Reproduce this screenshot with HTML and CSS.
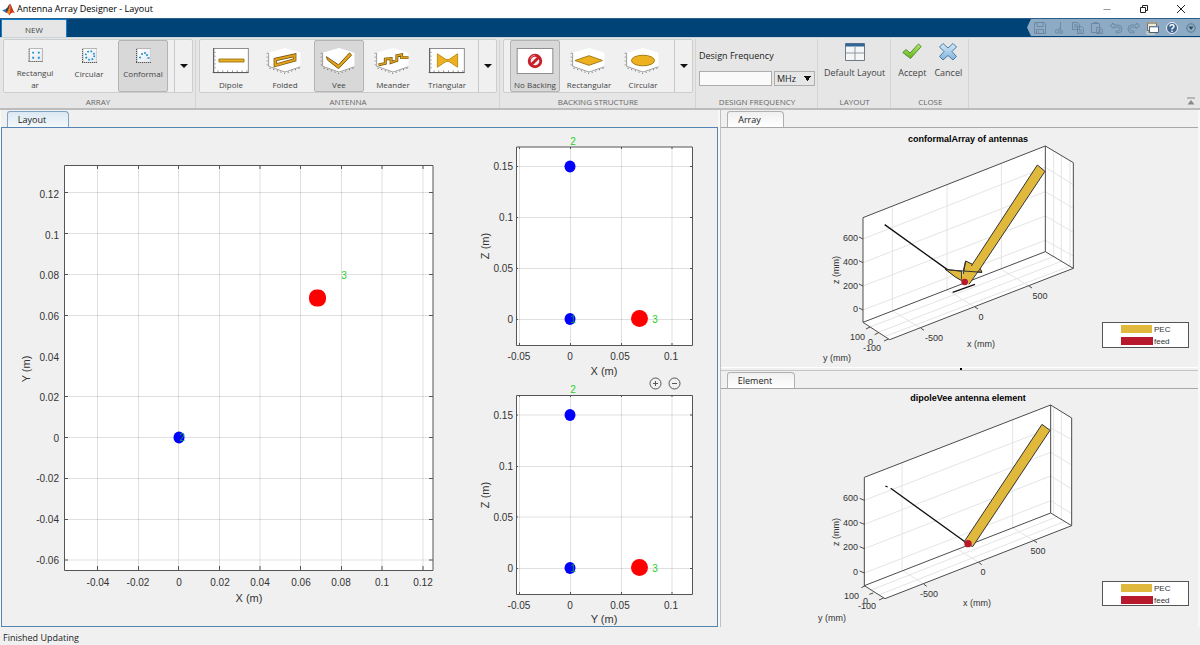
FILE: index.html
```html
<!DOCTYPE html>
<html lang="en">
<head>
<meta charset="utf-8">
<title>Antenna Array Designer - Layout</title>
<link rel="stylesheet" href="styles.css">
</head>
<body>
<svg class="defs" aria-hidden="true">
  <defs>
    <linearGradient id="sheet" x1="0" y1="0" x2="1" y2="1"><stop offset="0" stop-color="#fff"/><stop offset="1" stop-color="#e4e8ec"/></linearGradient>
    <linearGradient id="green" x1="0" y1="0" x2="0" y2="1"><stop offset="0" stop-color="#b5e86a"/><stop offset="1" stop-color="#5fb41e"/></linearGradient>
    <linearGradient id="blue" x1="0" y1="0" x2="0" y2="1"><stop offset="0" stop-color="#d4e9f8"/><stop offset="1" stop-color="#7fb2dc"/></linearGradient>
    <g id="flat-axes">
      <rect x="1" y=".5" width="36" height="25" fill="#fff" stroke="#8a8a8a"/>
      <path d="M1 0V26M0 25.500H37" stroke="#555"/>
      <path d="M2.500 4v20" stroke="#777" stroke-dasharray="1 3"/>
      <path d="M5 24h31" stroke="#444" stroke-dasharray="1 4"/>
    </g>
    <g id="cube-axes">
      <path d="M2 5L19 0L35 5V20L19 26L2 19Z" fill="#fff"/>
      <path d="M2 5V19L19 25L35 19.500" fill="none" stroke="#999"/>
      <path d="M.5 5V19" stroke="#777" stroke-dasharray="1 3"/>
      <path d="M3 21L19 26.500L34 21" fill="none" stroke="#555" stroke-dasharray="1 3"/>
    </g>
    <g id="small-axes">
      <rect x="1" y=".5" width="14" height="14" fill="url(#sheet)" stroke="#b5b5b5"/>
      <path d="M.5 1V15" stroke="#555" stroke-dasharray="1 1"/>
      <path d="M0 14.500H15" stroke="#555" stroke-dasharray="1 1"/>
    </g>
  </defs>
</svg>

<header class="titlebar">
  <svg class="logo" viewBox="0 0 13 13" aria-hidden="true">
    <path d="M0 7.500L4 5.800L6 7.600L3.700 9.500Z" fill="#3a7cb8"/>
    <path d="M4 5.800C6 5 6.500 1 8 1L6.800 8L3.700 9.500Z" fill="#24455f"/>
    <path d="M8 .8C9.500 1.500 11 8 13 10.500C11 9 9.500 9 7.500 12.500C6.800 11 5.500 9.800 3.700 9.500C6.500 8 7 2 8 .8Z" fill="#c8381c"/>
    <path d="M8 .8C8.700 3 8.500 8 7.500 12.500C6.800 11 6 10 5 9.600C7 7.500 7.500 3 8 .8Z" fill="#ee8a2a"/>
  </svg>
  <h1>Antenna Array Designer - Layout</h1>
  <div class="window-controls">
    <button type="button" aria-label="Minimize"><svg viewBox="0 0 10 10"><path d="M1.500 5.500h7" stroke="#999"/></svg></button>
    <button type="button" aria-label="Restore"><svg viewBox="0 0 10 10" fill="none" stroke="#222"><path d="M1.500 3.500h5v5h-5zM3.500 3V1.500h5v5H7"/></svg></button>
    <button type="button" aria-label="Close"><svg viewBox="0 0 10 10"><path d="M1 1l8 8M9 1l-8 8" stroke="#222"/></svg></button>
  </div>
</header>

<nav class="ribbon-tabs">
  <button type="button" class="ribbon-tab">NEW</button>
  <div class="quick-access">
    <button type="button" aria-label="Save" class="dim"><svg viewBox="0 0 14 14" fill="none" stroke="#56728c"><path d="M1.500 1.500h10l1 1v10h-11zM4 1.500v4h6v-4M3.500 12.500v-4h7v4M5.500 10v2.500"/></svg></button>
    <button type="button" aria-label="Cut" class="dim"><svg viewBox="0 0 14 14" fill="none" stroke="#56728c"><path d="M8.500 1v8M9 6L6 8.500"/><circle cx="5" cy="10.500" r="1.800"/><circle cx="9" cy="11" r="1.500"/></svg></button>
    <button type="button" aria-label="Copy" class="dim"><svg viewBox="0 0 14 14" fill="none" stroke="#56728c"><path d="M1.500 1.500h5l2 2v5h-7zM6.500 5.500h4l2 2v5h-6zM3 4h4M3 6h4M8 9h3M8 11h3"/></svg></button>
    <button type="button" aria-label="Paste" class="dim"><svg viewBox="0 0 14 14" fill="none" stroke="#56728c"><path d="M1.500 2.500h8v9h-8zM4 2.500v-1h3v1M6.500 6.500h4l2 2v4h-6zM8 9h3M8 11h3"/></svg></button>
    <button type="button" aria-label="Undo" class="dim"><svg viewBox="0 0 14 14" fill="none" stroke="#56728c"><path d="M4 2L1.500 5L5 7.500V6h4q2 0 2 2t-2 2H7v2h2q4 0 4-4t-4-4H5z"/></svg></button>
    <button type="button" aria-label="Redo" class="dim"><svg viewBox="0 0 14 14" fill="none" stroke="#56728c"><path d="M10 2L12.500 5L9 7.500V6H5Q3 6 3 8t2 2h2v2H5Q1 12 1 8t4-4h4z"/></svg></button>
    <button type="button" aria-label="Switch windows"><svg viewBox="0 0 14 14"><path d="M1.500 1.500h9v8h-9z" fill="#f2ead2" stroke="#766f5c"/><path d="M1.500 2h9" stroke="#a6a08a" stroke-width="2"/><path d="M3.500 5.500h9v6h-9z" fill="#fff" stroke="#4f5f70"/><path d="M4 6h8" stroke="#7da4c8"/><path d="M1 10v3h8" fill="none" stroke="#e6e0c6"/></svg></button>
    <button type="button" aria-label="Help"><svg viewBox="0 0 14 14"><circle cx="7" cy="7" r="5.500" fill="#40658e" stroke="#eef4fa" stroke-width="1"/><path d="M5 5.500Q5 3.800 7 3.800T9 5.500Q9 6.500 7 7.600V8.500" fill="none" stroke="#fff" stroke-width="1.400"/><path d="M7 9.500v1.500" stroke="#fff" stroke-width="1.400"/></svg></button>
    <button type="button" aria-label="Customize"><svg viewBox="0 0 14 14"><circle cx="7" cy="7" r="4.200" fill="none" stroke="#5a738a"/><path d="M4.500 5.500h5L7 9z" fill="#34485a"/></svg></button>
  </div>
</nav>

<section class="ribbon" aria-label="Toolstrip">
  <div class="group">
    <div class="gallery">
      <button type="button" class="tool small-icon"><svg viewBox="0 0 15 15"><use href="#small-axes"/><path d="M4 5h2M10 5h2M4 10.500h2M10 10.500h2" stroke="#1c8ed6" stroke-width="2"/></svg><span>Rectangul<br>ar</span></button>
      <button type="button" class="tool small-icon"><svg viewBox="0 0 15 15"><use href="#small-axes"/><circle cx="8" cy="7.500" r="4.300" fill="none" stroke="#1c8ed6" stroke-width="1.800" stroke-dasharray="1.600 1.780"/></svg><span>Circular</span></button>
      <button type="button" class="tool small-icon selected" aria-pressed="true"><svg viewBox="0 0 15 15"><use href="#small-axes"/><path d="M3 9.500h2M5 6h2M8 5h2M10 7h2M11.500 10h2" stroke="#1c8ed6" stroke-width="1.700"/></svg><span>Conformal</span></button>
      <button type="button" class="more" aria-label="More arrays"></button>
    </div>
    <h2>ARRAY</h2>
  </div>
  <div class="group">
    <div class="gallery">
      <button type="button" class="tool"><svg viewBox="0 0 38 27"><use href="#flat-axes"/><path d="M6.500 11.500h26v3h-26z" fill="#edb120" stroke="#9a7412"/></svg><span>Dipole</span></button>
      <button type="button" class="tool"><svg viewBox="0 0 38 27"><use href="#cube-axes"/><path d="M9 12L29 7.500V12.500L9 18Z" fill="none" stroke="#6d500c" stroke-width="3.600"/><path d="M9 12L29 7.500V12.500L9 18Z" fill="none" stroke="#dfa11b" stroke-width="2.200"/></svg><span>Folded</span></button>
      <button type="button" class="tool selected" aria-pressed="true"><svg viewBox="0 0 38 27"><use href="#cube-axes"/><path d="M6 9L18.500 17.500L30 5L32 7.500L18.500 21.500L7 12.500Z" fill="#e3a51c" stroke="#7a5a0e"/></svg><span>Vee</span></button>
      <button type="button" class="tool"><svg viewBox="0 0 38 27"><use href="#cube-axes"/><path d="M4 17.500L11 16V11.500L17 11V15L23 13V8L28 7V10L35 10" fill="none" stroke="#6d500c" stroke-width="3"/><path d="M4 17.500L11 16V11.500L17 11V15L23 13V8L28 7V10L35 10" fill="none" stroke="#dfa11b" stroke-width="1.600"/></svg><span>Meander</span></button>
      <button type="button" class="tool"><svg viewBox="0 0 38 27"><use href="#flat-axes"/><path d="M9 6L18 12H21L30 6V20L21 14H18L9 20Z" fill="#edb120" stroke="#c08e18"/></svg><span>Triangular</span></button>
      <button type="button" class="more" aria-label="More antennas"></button>
    </div>
    <h2>ANTENNA</h2>
  </div>
  <div class="group">
    <div class="gallery">
      <button type="button" class="tool selected" aria-pressed="true"><svg viewBox="0 0 38 27"><rect x=".5" y=".5" width="37" height="26" fill="#fff" stroke="#8a8a8a"/><circle cx="19" cy="13.500" r="6" fill="#f0f0f0" stroke="#c81e28" stroke-width="3"/><path d="M23 9.500l-8 8" stroke="#c81e28" stroke-width="3"/><path d="M14 11Q15.500 7.500 19 7.500" fill="none" stroke="#f08a90"/></svg><span>No Backing</span></button>
      <button type="button" class="tool"><svg viewBox="0 0 38 27"><use href="#cube-axes"/><path d="M4.500 13L19 8L33 13L19 18Z" fill="#edb120" stroke="#a07813"/></svg><span>Rectangular</span></button>
      <button type="button" class="tool"><svg viewBox="0 0 38 27"><use href="#cube-axes"/><ellipse cx="19" cy="13" rx="12" ry="5.500" fill="#edb120" stroke="#a07813"/></svg><span>Circular</span></button>
      <button type="button" class="more" aria-label="More backing structures"></button>
    </div>
    <h2>BACKING STRUCTURE</h2>
  </div>
  <div class="group">
    <div class="frequency">
      <label for="freq">Design Frequency</label>
      <div class="field-row">
        <input id="freq" type="text">
        <select aria-label="Frequency unit"><option>MHz</option><option>GHz</option></select>
      </div>
    </div>
    <h2>DESIGN FREQUENCY</h2>
  </div>
  <div class="group">
    <div class="actions">
      <button type="button" class="action"><svg viewBox="0 0 20 20"><path d="M.5 1.500h19v17h-19z" fill="#f4f6f8" stroke="#707a84"/><path d="M.5 3h19" stroke="#2f6797" stroke-width="3"/><path d="M10 5v13M1 11h18" stroke="#8d98a2"/></svg><span>Default Layout</span></button>
    </div>
    <h2>LAYOUT</h2>
  </div>
  <div class="group">
    <div class="actions">
      <button type="button" class="action"><svg viewBox="0 0 20 20"><path d="M.8 10.500L4 7.500L8 11L16.500 2L19.200 4.500L8.500 16.500Z" fill="url(#green)" stroke="#5a8f30" stroke-linejoin="round"/></svg><span>Accept</span></button>
      <button type="button" class="action"><svg viewBox="0 0 20 20"><path d="M5 1.500L10 6L15 1.500L18.500 5L14 9.500L18.500 14.500L15 18L10 13.500L5 18L1.500 14.500L6 9.500L1.500 5Z" fill="url(#blue)" stroke="#4b7ba6" stroke-linejoin="round"/></svg><span>Cancel</span></button>
    </div>
    <h2>CLOSE</h2>
  </div>
  <button type="button" class="collapse" aria-label="Collapse toolstrip"><svg viewBox="0 0 8 8"><path d="M0 1h8" stroke="#888" stroke-width="1"/><path d="M4 3L7.500 7.500h-7z" fill="#888"/></svg></button>
</section>

<main class="workspace">
  <section class="panel active">
    <div class="panel-tabs"><button type="button" class="panel-tab">Layout</button></div>
    <div class="panel-body plots">
      <svg class="plot" viewBox="2 128 468 498" role="img" aria-label="Array layout, X and Y">
        <rect x="64" y="165" width="369" height="405" fill="#fff"/>
        <path class="grid" d="M97.500 165V570M138.500 165V570M178.500 165V570M219.500 165V570M260 165V570M300.500 165V570M341.500 165V570M382 165V570M423 165V570M64 192.500H433M64 233.500H433M64 274.500H433M64 315.500H433M64 396.500H433M64 437.500H433M64 478.500H433M64 519.500H433M64 560H433"/>
        <path class="axis" d="M64.500 165.500H433V570.500H64.500ZM97.500 165v4M138.500 165v4M178.500 165v4M219.500 165v4M260 165v4M300.500 165v4M341.500 165v4M382 165v4M423 165v4M97.500 570v-4M138.500 570v-4M178.500 570v-4M219.500 570v-4M260 570v-4M300.500 570v-4M341.500 570v-4M382 570v-4M423 570v-4M64 192.500h4M64 233.500h4M64 274.500h4M64 315.500h4M64 396.500h4M64 437.500h4M64 478.500h4M64 519.500h4M64 560h4M433 192.500h-4M433 233.500h-4M433 274.500h-4M433 315.500h-4M433 396.500h-4M433 437.500h-4M433 478.500h-4M433 519.500h-4M433 560h-4"/>
        <g class="tick end">
          <text x="59" y="198">0.12</text><text x="59" y="239">0.1</text><text x="59" y="279">0.08</text><text x="59" y="320">0.06</text><text x="59" y="361">0.04</text><text x="59" y="401">0.02</text><text x="59" y="442">0</text><text x="59" y="482">-0.02</text><text x="59" y="523">-0.04</text><text x="59" y="564">-0.06</text>
        </g>
        <g class="tick mid">
          <text x="98" y="586">-0.04</text><text x="138" y="586">-0.02</text><text x="179" y="586">0</text><text x="220" y="586">0.02</text><text x="260" y="586">0.04</text><text x="301" y="586">0.06</text><text x="341" y="586">0.08</text><text x="382" y="586">0.1</text><text x="423" y="586">0.12</text>
        </g>
        <text class="axis-name" x="249" y="602">X (m)</text>
        <text class="axis-name" transform="translate(30 369) rotate(-90)">Y (m)</text>
        <ellipse cx="179" cy="437.500" rx="5.500" ry="6" fill="#00f"/>
        <rect x="309" y="289.500" width="17" height="17" rx="7.500" fill="#f00"/>
        <g class="marker"><text x="344" y="279">3</text><text class="faded" x="182" y="441">2</text></g>
      </svg>
      <div class="side-plots">
        <svg class="plot" viewBox="470 128 247 498" role="img" aria-label="Array layout, X and Z, Y and Z">
          <rect x="516" y="147" width="176" height="198" fill="#fff"/>
          <path class="grid" d="M519.500 147V345M570.500 147V345M621.500 147V345M672 147V345M516 166.500H692M516 217.500H692M516 268.500H692M516 319.500H692"/>
          <path class="axis" d="M516.500 147H692.500V345.500H516.500ZM519.500 147v2M570.500 147v2M621.500 147v2M672 147v2M519.500 345v-2M570.500 345v-2M621.500 345v-2M672 345v-2M516 166.500h2M516 217.500h2M516 268.500h2M516 319.500h2M692 166.500h-2M692 217.500h-2M692 268.500h-2M692 319.500h-2"/>
          <g class="tick end"><text x="513" y="170">0.15</text><text x="513" y="221">0.1</text><text x="513" y="272">0.05</text><text x="513" y="323">0</text></g>
          <g class="tick mid"><text x="519" y="360">-0.05</text><text x="570" y="360">0</text><text x="620" y="360">0.05</text><text x="671" y="360">0.1</text></g>
          <text class="axis-name" x="604" y="375">X (m)</text>
          <text class="axis-name" transform="translate(489 246) rotate(-90)">Z (m)</text>
          <ellipse cx="570" cy="166.500" rx="5.500" ry="6" fill="#00f"/><ellipse cx="570" cy="319" rx="5.500" ry="6" fill="#00f"/><circle cx="639.500" cy="318.500" r="8.500" fill="#f00"/>
          <g class="marker"><text x="573" y="145">2</text><text x="655" y="323">3</text><text class="faded" x="573" y="323">1</text></g>

          <rect x="516" y="395" width="176" height="199" fill="#fff"/>
          <path class="grid" d="M519.500 395V594M570.500 395V594M621.500 395V594M672 395V594M516 415H692M516 466.500H692M516 517H692M516 568.500H692"/>
          <path class="axis" d="M516.500 395.500H692.500V594.500H516.500ZM519.500 395v2M570.500 395v2M621.500 395v2M672 395v2M519.500 594v-2M570.500 594v-2M621.500 594v-2M672 594v-2M516 415h2M516 466.500h2M516 517h2M516 568.500h2M692 415h-2M692 466.500h-2M692 517h-2M692 568.500h-2"/>
          <g class="tick end"><text x="513" y="419">0.15</text><text x="513" y="470">0.1</text><text x="513" y="521">0.05</text><text x="513" y="572">0</text></g>
          <g class="tick mid"><text x="519" y="609">-0.05</text><text x="570" y="609">0</text><text x="620" y="609">0.05</text><text x="671" y="609">0.1</text></g>
          <text class="axis-name" x="604" y="623">Y (m)</text>
          <text class="axis-name" transform="translate(489 495) rotate(-90)">Z (m)</text>
          <ellipse cx="570" cy="415" rx="5.500" ry="6" fill="#00f"/><ellipse cx="570" cy="568" rx="5.500" ry="6" fill="#00f"/><circle cx="639.500" cy="567.500" r="8.500" fill="#f00"/>
          <g class="marker"><text x="573" y="393">2</text><text x="655" y="572">3</text><text class="faded" x="573" y="572">1</text></g>
        </svg>
        <div class="zoom-tools">
          <button type="button" aria-label="Zoom in"><svg viewBox="0 0 13 13" fill="none" stroke="#555"><circle cx="6.500" cy="6.500" r="5.500"/><path d="M4 6.500h5M6.500 4v5"/></svg></button>
          <button type="button" aria-label="Zoom out"><svg viewBox="0 0 13 13" fill="none" stroke="#555"><circle cx="6.500" cy="6.500" r="5.500"/><path d="M4 6.500h5"/></svg></button>
        </div>
      </div>
    </div>
  </section>

  <div class="stack">
    <section class="panel">
      <div class="panel-tabs"><button type="button" class="panel-tab">Array</button></div>
      <div class="panel-body">
        <svg class="plot" viewBox="721 128 477 242" role="img" aria-label="conformalArray of antennas">
          <text class="plot-title" x="968" y="142">conformalArray of antennas</text>
          <g transform="translate(820 130) scale(.33333)" stroke-width="3" fill="none">
            <path d="M129 263L676 48L760 98V415L209 629L129 577Z" fill="#fff"/>
            <path stroke="#e4e4e4" d="M217 229V542L303 595M381 166V480L465 531M544 101V418L627 468M129 327L676 112L760 164M129 398L676 185L760 235M129 468L676 258L760 307M129 540L676 331L760 378M147 592L700 380M173 608L724 394M191 621L749 409M701 63V380M724 77V394M750 92V409"/>
            <path stroke="#4a4a4a" d="M129 577V263L676 48L760 98V415L209 629L129 577L676 365L760 415M676 48V365M129 327l-12-6M129 398l-12-6M129 468l-12-6M129 540l-12-6M150 591l-12 6M176 608l-12 6M206 627l-14 6M303 595l9 6M465 531l9 6M627 468l9 6"/>
            <path stroke="#111" stroke-width="4" d="M194 284L378 416L436 456M398 487L465 463"/>
            <path d="M376 418L425 424V452L406 441Z M437 393L480 414L486 427L430 422Z" fill="#e0b93c" stroke="#222"/>
            <path d="M652 105L675 124L479 418L447 463L424 452L430 422L454 408Z" fill="#e0b93c"/>
            <path d="M454 408L652 105L675 124L479 418L447 463M376 419L486 427M430 432L437 393" stroke="#333"/>
            <circle cx="434" cy="456" r="10" fill="#b8182c"/>
          </g>
          <g class="tick3 end"><text x="858" y="241">600</text><text x="858" y="265">400</text><text x="858" y="289">200</text><text x="858" y="312">0</text><text x="865" y="340">100</text><text x="873" y="345">0</text><text x="881" y="351">-100</text></g>
          <g class="tick3 mid"><text x="934" y="341">-500</text><text x="981" y="320">0</text><text x="1040" y="299">500</text><text x="981" y="347">x (mm)</text><text x="837" y="361">y (mm)</text><text transform="translate(839 270) rotate(-90)">z (mm)</text></g>
          <rect x="1102.500" y="322.500" width="86" height="25" fill="#fff" stroke="#555"/><rect x="1121" y="325" width="31" height="8" fill="#e0b93c"/><rect x="1121" y="337" width="32" height="8" fill="#b8182c"/>
          <g class="legend"><text x="1154" y="332">PEC</text><text x="1154" y="344">feed</text></g>
          <path d="M721 367.500H1198" stroke="#fff"/>
        </svg>
      </div>
    </section>
    <section class="panel split">
      <div class="panel-tabs"><button type="button" class="panel-tab wide">Element</button></div>
      <div class="panel-body">
        <svg class="plot" viewBox="721 389 477 238" role="img" aria-label="dipoleVee antenna element">
          <text class="plot-title" x="968" y="401">dipoleVee antenna element</text>
          <g transform="translate(820 365) scale(.33333)" stroke-width="3" fill="none">
            <path d="M133 337L692 120L755 159V482L195 701L133 662Z" fill="#fff"/>
            <path stroke="#e4e4e4" d="M246 294V615L311 657M578 165V488L642 527M410 551L476 592M133 406L692 189L755 223M133 478L692 262L755 300M133 551L692 333L755 372M133 624L692 407L755 446M154 675L712 455M176 690L735 469M701 126V450M724 140V463"/>
            <path stroke="#4a4a4a" d="M133 662V337L692 120L755 159V482L195 701L133 662L692 444L755 482M692 120V444M133 406l-14-6M133 478l-14-6M133 551l-14-6M133 624l-14-6M136 662l-12 6M160 684l-12 4M191 699l-14 6M311 657l9 7M476 592l9 7M642 527l9 6"/>
            <path stroke="#111" stroke-width="4" d="M196 363L203 366M212 370L440 534"/>
            <path d="M666 178L690 196L458 545L432 531Z" fill="#e0b93c" stroke="#333"/>
            <circle cx="444" cy="536" r="11" fill="#b8182c"/>
          </g>
          <g class="tick3 end"><text x="858" y="501">600</text><text x="858" y="526">400</text><text x="858" y="550">200</text><text x="858" y="575">0</text><text x="859" y="599">100</text><text x="868" y="604">0</text><text x="876" y="609">-100</text></g>
          <g class="tick3 mid"><text x="929" y="597">-500</text><text x="983" y="575">0</text><text x="1038" y="554">500</text><text x="977" y="606">x (mm)</text><text x="832" y="621">y (mm)</text><text transform="translate(839 532) rotate(-90)">z (mm)</text></g>
          <rect x="1102.500" y="581.500" width="86" height="24" fill="#fff" stroke="#555"/><rect x="1121" y="584" width="31" height="8" fill="#e0b93c"/><rect x="1121" y="596" width="32" height="8" fill="#b8182c"/>
          <g class="legend"><text x="1154" y="591">PEC</text><text x="1154" y="603">feed</text></g>
        </svg>
      </div>
    </section>
  </div>
</main>

<footer class="statusbar">Finished Updating</footer>
</body>
</html>
```
FILE: styles.css
```css
* { box-sizing: border-box; }

body {
  margin: 0;
  min-height: 100vh;
  display: flex;
  flex-direction: column;
  background: #f0f0f0;
  color: #222;
  font: 9px/12px "Open Sans", "Noto Sans", sans-serif;
}

button, input, select {
  font: inherit;
  color: inherit;
  margin: 0;
  padding: 0;
  border: 0;
  border-radius: 0;
  background: none;
}

svg { display: block; }
h1, h2 { margin: 0; font: inherit; }
.defs { position: absolute; width: 0; height: 0; }

/* Title bar */
.titlebar {
  display: flex;
  align-items: center;
  height: 18px;
  padding-left: 2px;
  background: #fff;
  color: #000;
}
.logo { width: 13px; height: 13px; margin-right: 2px; }
.window-controls { display: flex; margin-left: auto; padding-right: 1px; }
.window-controls button { width: 37px; height: 18px; display: grid; place-items: center; }
.window-controls svg { width: 10px; height: 10px; }

/* Tab band */
.ribbon-tabs {
  display: flex;
  justify-content: space-between;
  height: 19px;
  padding-left: 1px;
  background: #004377;
  border-top: 1px solid #2a5f8c;
}
.ribbon-tab {
  width: 66px;
  padding-top: 2px;
  background: #e6e6e6;
  border: solid #0a7fd0;
  border-width: 1px 1px 0;
  color: #444;
  font-size: 8px;
}
.quick-access {
  display: flex;
  width: 173px;
  height: 17px;
  padding: 0 0 0 4px;
  background: #8eabc5;
  clip-path: polygon(4px 0, 100% 0, 100% 100%, 4px 100%, 0 50%);
}
.quick-access button { flex: 1; display: grid; place-items: center; }
.quick-access svg { width: 14px; height: 14px; }
.quick-access .dim { opacity: .6; }

/* Toolstrip */
.ribbon {
  display: flex;
  height: 73px;
  padding-top: 1px;
  background: #e6e6e6;
  border-top: 1px solid #c9d3dc;
  border-bottom: 2px solid #bcbcbc;
  color: #444;
  font-size: 8px;
  line-height: 12px;
}
.group {
  display: flex;
  flex-direction: column;
  justify-content: space-between;
  padding: 0 2px 0 3px;
  border-right: 1px solid #d4d4d4;
}
.group h2 { height: 12px; line-height: 12px; text-align: center; color: #666; }
.gallery {
  display: flex;
  gap: 4px;
  height: 54px;
  padding-left: 6px;
  border: 1px solid #cdcdcd;
  border-radius: 2px;
  background: #f0f0f0;
}
.tool {
  display: flex;
  flex-direction: column;
  align-items: center;
  width: 50px;
  height: 52px;
  padding-top: 7px;
  border: 1px solid transparent;
  border-radius: 2px;
  white-space: nowrap;
}
.tool svg { width: 38px; height: 27px; margin-bottom: 5px; }
.tool.small-icon svg { width: 15px; height: 15px; margin-bottom: 5px; }
.tool.selected { background: #d8d8d8; border-color: #b4b4b4; }
.more {
  width: 18px;
  margin-left: 2px;
  border-left: 1px solid #c8c8c8;
  display: grid;
  place-items: center;
}
.more::after {
  content: "";
  border: 4px solid transparent;
  border-top-color: #111;
  border-bottom: 0;
}

.frequency { width: 116px; padding-top: 11px; color: #222; font-size: 9px; }
.frequency label { display: block; margin-bottom: 9px; }
.field-row { display: flex; gap: 2px; }
.field-row input {
  flex: 1;
  min-width: 0;
  height: 15px;
  background: #fafafa;
  border: 1px solid #adadad;
}
.field-row select {
  appearance: none;
  width: 41px;
  height: 15px;
  padding-left: 2px;
  border: 1px solid #adadad;
  background-color: #e6e6e6;
  background-image: conic-gradient(from -37deg at 50% 100%, #111 74deg, transparent 0);
  background-size: 7px 5px;
  background-position: right 3px center;
  background-repeat: no-repeat;
}

.actions { display: flex; justify-content: center; padding-top: 3px; font-size: 9px; }
.action {
  display: flex;
  flex-direction: column;
  align-items: center;
  gap: 5px;
  min-width: 36px;
  padding: 0 3px;
  white-space: nowrap;
}
.action svg { width: 20px; height: 20px; }
.collapse { align-self: flex-end; margin: 0 5px 3px auto; }
.collapse svg { width: 8px; height: 8px; }

/* Panels */
.workspace {
  flex: 1;
  display: grid;
  grid-template-columns: 717fr 480fr;
  gap: 2px;
  padding-left: 1px;
  background: #f8f8f8;
}
.stack {
  display: grid;
  grid-template-rows: 260fr 257fr;
  border-left: 1px solid #c0c0c0;
  padding-right: 2px;
}
.panel { display: flex; flex-direction: column; min-width: 0; min-height: 0; background: #f0f0f0; }
.panel-tabs {
  display: flex;
  align-items: flex-end;
  height: 17px;
  padding-left: 6px;
}
.panel-tab {
  width: 57px;
  height: 16px;
  padding-right: 12px;
  border: 1px solid #b0b0b0;
  border-bottom: 0;
  border-radius: 3px 4px 0 0;
  background: linear-gradient(#f0f0f0, #fff);
  color: #222;
}
.panel-tab.wide { width: 68px; }
.panel-body { flex: 1; min-height: 0; border-top: 1px solid #a8a8a8; }
.active .panel-tab { width: 62px; border-color: #7fa3c4; background: linear-gradient(#dbe8f3, #f4f8fb); }
.active .panel-body { border: 1px solid #5584b2; }
.split { position: relative; border-top: 1px solid #c4c4c4; }
.split::before {
  content: "";
  position: absolute;
  top: -3px;
  left: 50%;
  width: 2px;
  height: 2px;
  background: #000;
}

/* Plots */
.plots { display: grid; grid-template-columns: 468fr 247fr; }
.side-plots { position: relative; min-width: 0; }
.plot { width: 100%; height: 100%; }
.plot text { font-family: "Liberation Sans", Arial, sans-serif; fill: #333; }
.plot .grid { stroke: #000; stroke-opacity: .12; fill: none; }
.plot .axis { stroke: #555; fill: none; }
.tick { font-size: 10px; }
.tick3 { font-size: 9px; }
.end { text-anchor: end; }
.mid { text-anchor: middle; }
.plot .axis-name { font-size: 11px; text-anchor: middle; }
.plot .plot-title { font-size: 9px; font-weight: bold; text-anchor: middle; fill: #000; }
.plot .legend { font-size: 8px; }
.plot .marker text { font-size: 10px; text-anchor: middle; fill: #1fd01f; }
.plot .marker .faded { fill: #0a9060; }
.zoom-tools {
  position: absolute;
  top: 249px;
  right: 36px;
  display: flex;
  gap: 6px;
}
.zoom-tools svg { width: 13px; height: 13px; }

.statusbar { height: 18px; padding: 5px 3px 0; }
```
